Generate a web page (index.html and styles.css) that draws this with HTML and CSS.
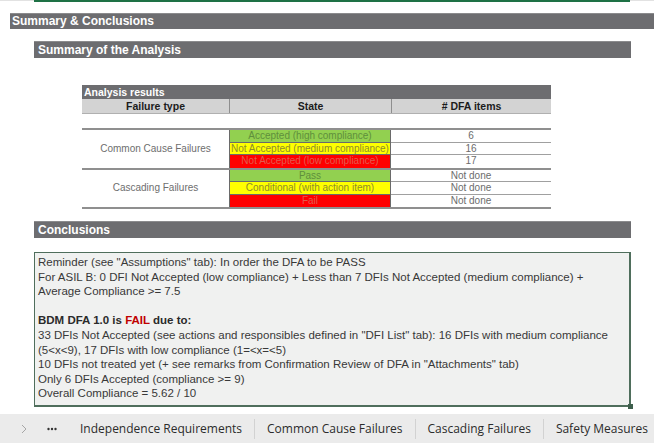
FILE: index.html
```html
<!DOCTYPE html>
<html>
<head>
<meta charset="utf-8">
<link rel="stylesheet" href="styles.css">
</head>
<body>
<div class="page">
  <div class="topline"><span class="tl-side"></span><span class="tl-green"></span><span class="tl-side"></span></div>
  <div class="h1">Summary &amp; Conclusions</div>
  <div class="section">
    <div class="h2">Summary of the Analysis</div>
    <div class="results">
      <div class="res-title">Analysis results</div>
      <div class="res-head">
        <div class="hc">Failure type</div>
        <div class="hc">State</div>
        <div class="hc">#&nbsp;DFA items</div>
      </div>
      <div class="res-blank"></div>
      <div class="group">
        <div class="ft">Common Cause Failures</div>
        <div class="st green">Accepted (high compliance)</div>
        <div class="cnt">6</div>
        <div class="st yellow">Not Accepted (medium compliance)</div>
        <div class="cnt">16</div>
        <div class="st red">Not Accepted (low compliance)</div>
        <div class="cnt last">17</div>
      </div>
      <div class="group final">
        <div class="ft">Cascading Failures</div>
        <div class="st green">Pass</div>
        <div class="cnt">Not done</div>
        <div class="st yellow">Conditional (with action item)</div>
        <div class="cnt">Not done</div>
        <div class="st red">Fail</div>
        <div class="cnt last">Not done</div>
      </div>
    </div>
    <div class="h2">Conclusions</div>
    <div class="box">
      <p>Reminder (see "Assumptions" tab): In order the DFA to be PASS</p>
      <p>For ASIL B: 0 DFI Not Accepted (low compliance) + Less than 7 DFIs Not Accepted (medium compliance) +</p>
      <p>Average Compliance &gt;= 7.5</p>
      <p class="blank"></p>
      <p class="bold">BDM DFA 1.0 is <span class="fail">FAIL</span> due to:</p>
      <p>33 DFIs Not Accepted (see actions and responsibles defined in "DFI List" tab): 16 DFIs with medium compliance</p>
      <p>(5&lt;x&lt;9), 17 DFIs with low compliance (1=&lt;x=&lt;5)</p>
      <p>10 DFIs not treated yet (+ see remarks from Confirmation Review of DFA in "Attachments" tab)</p>
      <p>Only 6 DFIs Accepted (compliance &gt;= 9)</p>
      <p>Overall Compliance = 5.62 / 10</p>
      <span class="handle"></span>
    </div>
  </div>
  <div class="tabs">
    <span class="chev"><svg width="6" height="10" viewBox="0 0 6 10"><polyline points="1,1 5,5 1,9" fill="none" stroke="#a6a6a6" stroke-width="1"/></svg></span>
    <span class="dots"><svg width="10" height="4" viewBox="0 0 10 4"><circle cx="1.5" cy="2" r="1.2" fill="#333"/><circle cx="5" cy="2" r="1.2" fill="#333"/><circle cx="8.5" cy="2" r="1.2" fill="#333"/></svg></span>
    <span class="tab first">Independence Requirements</span>
    <span class="sep"></span>
    <span class="tab">Common Cause Failures</span>
    <span class="sep"></span>
    <span class="tab">Cascading Failures</span>
    <span class="sep"></span>
    <span class="tab">Safety Measures</span>
  </div>
</div>
</body>
</html>
```

FILE: styles.css
```css
* { box-sizing: border-box; }
html, body { margin: 0; padding: 0; background: #ffffff; }
body { width: 654px; height: 443px; overflow: hidden; font-family: "Liberation Sans", Arial, sans-serif; }

.page { display: flex; flex-direction: column; height: 443px; }

.topline { display: flex; height: 2px; }
.tl-side { width: 34px; background: #e2e2e2; height: 1px; }
.tl-side:last-child { width: 24px; }
.tl-green { flex: 1; background: #1e7145; }

.h1 {
  margin: 11px 0 0 10px;
  height: 16px;
  background: #6d6d70;
  border-top: 1px solid #8b8b8d;
  color: #ffffff;
  font-weight: bold;
  font-size: 12px;
  line-height: 15px;
  padding-left: 2px;
}

.section { margin-left: 34px; width: 597px; display: flex; flex-direction: column; }

.h2 {
  height: 17px;
  background: #6d6d70;
  border-top: 1px solid #8b8b8d;
  color: #ffffff;
  font-weight: bold;
  font-size: 12px;
  line-height: 16px;
  padding-left: 4px;
  margin-top: 12px;
}

.results { margin: 27px 0 0 48px; width: 469px; font-size: 10px; }
.res-title {
  height: 14px;
  background: #6d6d70;
  color: #fff;
  font-weight: bold;
  font-size: 10.5px;
  line-height: 14px;
  padding-left: 2px;
}
.res-head {
  display: grid;
  grid-template-columns: 147px 162px 160px;
  height: 15px;
  background: #d3d3d3;
  border-bottom: 1px solid #b0b0b0;
}
.hc {
  text-align: center;
  font-weight: bold;
  color: #1c1c1c;
  font-size: 10.5px;
  line-height: 14px;
  border-left: 1px solid #8e8e8e;
}
.hc:first-child { border-left: none; }
.res-blank { height: 14px; }

.group {
  display: grid;
  grid-template-columns: 147px 162px 160px;
  grid-auto-rows: 12.5px;
  border-top: 2px solid #8f8f8f;
  color: #767676;
  line-height: 12px;
}
.group.final { border-bottom: 2px solid #8f8f8f; }
.ft {
  grid-row: span 3;
  display: flex;
  align-items: center;
  justify-content: center;
  font-size: 10px;
  color: #6e6e6e;
}
.st {
  text-align: center;
  border-left: 1px solid #6a6a6a;
  border-right: 1px solid #6a6a6a;
  border-bottom: 1px solid #6a6a6a;
  white-space: nowrap;
}
.st.green { background: #92d050; color: #5f8f3c; }
.st.yellow { background: #ffff00; color: #8d8d2a; }
.st.red { background: #ff0000; color: #e25a4e; border-bottom: none; }
.cnt { text-align: center; border-bottom: 1px solid #a0a0a0; color: #6c6c6c; }
.cnt.last { border-bottom: none; }

.box {
  position: relative;
  margin-top: 14px;
  height: 155px;
  background: #f0f1f0;
  border: 1px solid #4f6e5c;
  border-right-width: 2px;
  border-bottom-width: 2px;
  padding: 2px 0 0 3px;
  font-size: 11.5px;
  color: #383838;
}
.box p { margin: 0; height: 14.6px; line-height: 14.6px; white-space: nowrap; }
.box .bold { font-weight: bold; color: #2a2a2a; }
.fail { color: #c00000; }
.handle {
  position: absolute;
  right: -4px;
  bottom: -4px;
  width: 5px;
  height: 5px;
  background: #3e5f4c;
}

.tabs {
  margin-top: auto;
  height: 29px;
  background: #ebebeb;
  display: flex;
  align-items: center;
  font-family: "Open Sans", "Noto Sans", sans-serif;
  font-size: 12px;
  color: #2b2b2b;
  white-space: nowrap;
  overflow: hidden;
}
.tabs > * { flex-shrink: 0; }
.chev { margin-left: 21px; width: 26px; display: flex; align-items: center; }
.dots { width: 33px; display: flex; align-items: center; }
.tab { padding: 0 12px; }
.tab.first { padding-left: 0; }
.sep { width: 1px; height: 20px; background: #d2d2d2; }
```
